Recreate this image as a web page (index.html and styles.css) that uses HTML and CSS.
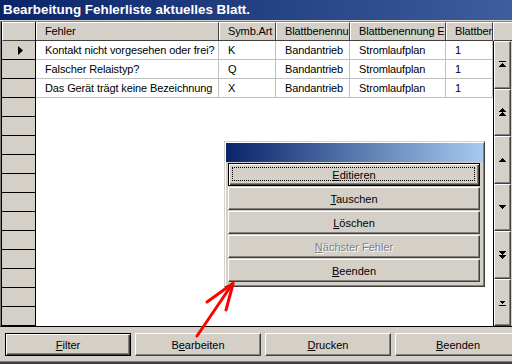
FILE: index.html
```
<!DOCTYPE html>
<html lang="de">

<head>
    <meta charset="UTF-8">
    <title>Bearbeitung Fehlerliste aktuelles Blatt.</title>
    <link rel="stylesheet" href="styles.css">
</head>

<body>
    <div class="window">
        <div class="caption">Bearbeitung Fehlerliste aktuelles Blatt.</div>

        <div class="sheet">
            <div class="selectors">
                <div class="sel-head"></div>
                <div class="sel"><svg width="6" height="9" viewBox="0 0 6 9"><polygon points="0,0 5,4.5 0,9" fill="#000"/></svg></div>
                <div class="sel"></div>
                <div class="sel"></div>
                <div class="sel"></div>
                <div class="sel"></div>
                <div class="sel"></div>
                <div class="sel"></div>
                <div class="sel"></div>
                <div class="sel"></div>
                <div class="sel"></div>
                <div class="sel"></div>
                <div class="sel"></div>
                <div class="sel"></div>
                <div class="sel"></div>
                <div class="sel"></div>
            </div>

            <div class="data">
                <div class="row head">
                    <div class="cell c-fehler">Fehler</div>
                    <div class="cell c-symb">Symb.Art</div>
                    <div class="cell c-blatt1">Blattbenennu</div>
                    <div class="cell c-blatt2">Blattbenennung E</div>
                    <div class="cell c-nr">Blattber</div>
                </div>
                <div class="row">
                    <div class="cell c-fehler">Kontakt nicht vorgesehen oder frei?</div>
                    <div class="cell c-symb">K</div>
                    <div class="cell c-blatt1">Bandantrieb</div>
                    <div class="cell c-blatt2">Stromlaufplan</div>
                    <div class="cell c-nr">1</div>
                </div>
                <div class="row">
                    <div class="cell c-fehler">Falscher Relaistyp?</div>
                    <div class="cell c-symb">Q</div>
                    <div class="cell c-blatt1">Bandantrieb</div>
                    <div class="cell c-blatt2">Stromlaufplan</div>
                    <div class="cell c-nr">1</div>
                </div>
                <div class="row">
                    <div class="cell c-fehler">Das Gerät trägt keine Bezeichnung</div>
                    <div class="cell c-symb">X</div>
                    <div class="cell c-blatt1">Bandantrieb</div>
                    <div class="cell c-blatt2">Stromlaufplan</div>
                    <div class="cell c-nr">1</div>
                </div>
            </div>

            <div class="nav">
                <div class="nav-head"></div>
                <!-- erster / seite hoch / hoch / runter / seite runter / letzter -->
                <div class="nav-btn"><svg width="7" height="7" viewBox="0 0 7 7"><rect x="0" y="0" width="7" height="1"/><polygon points="3.5,1.5 7,5.5 0,5.5"/></svg></div>
                <div class="nav-btn"><svg width="7" height="8" viewBox="0 0 7 8"><polygon points="3.5,0 7,4 0,4"/><polygon points="3.5,4 7,8 0,8"/></svg></div>
                <div class="nav-btn"><svg width="7" height="4" viewBox="0 0 7 4"><polygon points="3.5,0 7,4 0,4"/></svg></div>
                <div class="nav-btn"><svg width="7" height="4" viewBox="0 0 7 4"><polygon points="0,0 7,0 3.5,4"/></svg></div>
                <div class="nav-btn"><svg width="7" height="8" viewBox="0 0 7 8"><polygon points="0,0 7,0 3.5,4"/><polygon points="0,4 7,4 3.5,8"/></svg></div>
                <div class="nav-btn"><svg width="7" height="7" viewBox="0 0 7 7"><polygon points="0,1.5 7,1.5 3.5,5.5"/><rect x="0" y="6" width="7" height="1"/></svg></div>
            </div>
        </div>

        <div class="footer">
            <button class="btn default"><u>F</u>ilter</button>
            <button class="btn">B<u>e</u>arbeiten</button>
            <button class="btn"><u>D</u>rucken</button>
            <button class="btn"><u>B</u>eenden</button>
        </div>
        <div class="frame-bottom"></div>

        <div class="dialog">
            <div class="dialog-caption"></div>
            <button class="btn default focus"><u>E</u>ditieren</button>
            <button class="btn"><u>T</u>auschen</button>
            <button class="btn"><u>L</u>öschen</button>
            <button class="btn disabled"><u>N</u>ächster Fehler</button>
            <button class="btn"><u>B</u>eenden</button>
        </div>

        <svg class="arrow" width="512" height="364" viewBox="0 0 512 364">
            <path d="M197 336 L233 283" />
            <path d="M207 302 L232 284" />
            <path d="M226 310 L233 284" />
        </svg>
    </div>
</body>

</html>
```

FILE: styles.css
```
body {
    margin: 0;
    background-color: #d4d0c8;
    font-family: 'Liberation Sans', Arial, sans-serif;
    font-size: 11px;
    letter-spacing: -0.12px;
    color: #000;
}

.window {
    position: relative;
    width: 512px;
    height: 364px;
    overflow: hidden;
    background-color: #d4d0c8;
}

.caption {
    height: 20px;
    line-height: 20px;
    padding-left: 3px;
    background: linear-gradient(to right, #0a246a, #3d5d9c);
    color: #fff;
    font-weight: bold;
    font-size: 13.4px;
    letter-spacing: 0;
    white-space: nowrap;
}

/* datenblatt */
.sheet {
    display: flex;
    margin-top: 1px;
    border-top: 1px solid #808080;
    border-left: 1px solid #808080;
    border-bottom: 1px solid #000;
    height: 304px;
}

.selectors {
    width: 33px;
    border-left: 1px solid #000;
    border-right: 1px solid #000;
}
.sel-head {
    height: 17px;
    border-top: 1px solid #fff;
    border-left: 1px solid #fff;
    border-bottom: 1px solid #404040;
}
.sel {
    height: 18px;
    border-bottom: 1px solid #000;
    display: flex;
    align-items: center;
    justify-content: center;
}
.sel svg {
    margin-left: 5px;
}

.data {
    width: 457px;
    background-color: #fff;
}
.row {
    display: flex;
    height: 18px;
    border-bottom: 1px solid #c0c0c0;
}
.cell {
    box-sizing: border-box;
    height: 18px;
    line-height: 18px;
    padding-left: 9px;
    border-right: 1px solid #c0c0c0;
    white-space: nowrap;
    overflow: hidden;
}
.row.head {
    background-color: #d4d0c8;
    border-bottom: 1px solid #404040;
}
.row.head .cell {
    line-height: 17px;
    border-top: 1px solid #fff;
    border-left: 1px solid #fff;
    border-right: 1px solid #404040;
    padding-left: 8px;
}
.c-fehler { width: 183px; }
.c-symb { width: 57px; }
.c-blatt1 { width: 74px; }
.c-blatt2 { width: 96px; }
.c-nr { width: 47px; }

.nav {
    display: flex;
    flex-direction: column;
    width: 18px;
    border-left: 1px solid #000;
}
.nav-head {
    height: 17px;
    flex: none;
    border-top: 1px solid #fff;
    border-left: 1px solid #fff;
    border-bottom: 1px solid #404040;
    margin-left: -1px;
}
.nav-btn {
    flex: 1;
    display: flex;
    align-items: center;
    justify-content: center;
    width: 15px;
    border-top: 1px solid #fff;
    border-left: 1px solid #fff;
    border-right: 1px solid #404040;
    border-bottom: 1px solid #404040;
    box-shadow: inset -1px -1px #808080;
}
.nav-btn svg {
    shape-rendering: crispEdges;
    fill: #000;
}

/* knoepfe */
.btn {
    position: relative;
    box-sizing: border-box;
    height: 23px;
    padding: 0;
    background-color: #d4d0c8;
    font-family: 'Liberation Sans', Arial, sans-serif;
    font-size: 11px;
    color: #000;
    border: 1px solid;
    border-color: #fff #404040 #404040 #fff;
    box-shadow: inset -1px -1px #808080;
}
.btn.default {
    border: 1px solid #000;
    box-shadow: inset 1px 1px #fff, inset -1px -1px #404040, inset -2px -2px #808080;
}
.btn.focus::after {
    content: '';
    position: absolute;
    top: 3px;
    left: 3px;
    right: 4px;
    bottom: 4px;
    border: 1px dotted #000;
}
.btn.disabled {
    color: #808080;
    text-shadow: 1px 1px #fff;
}

.footer {
    display: flex;
    gap: 4px;
    height: 27px;
    padding: 6px 0 0 5px;
}
.footer .btn {
    flex: none;
    width: 126px;
}
.frame-bottom {
    height: 2px;
    margin-top: 1px;
    border-top: 1px solid #808080;
    background-color: #404040;
}

/* dialog */
.dialog {
    position: absolute;
    left: 224px;
    top: 141px;
    width: 261px;
    height: 146px;
    box-sizing: border-box;
    padding: 1px;
    border: 1px solid;
    border-color: #d4d0c8 #404040 #404040 #d4d0c8;
    box-shadow: inset 1px 1px #fff, inset -1px -1px #808080;
    background-color: #d4d0c8;
    display: flex;
    flex-direction: column;
}
.dialog-caption {
    height: 19px;
    margin-bottom: 1px;
    background: linear-gradient(to right, #0a246a, #a6caf0);
}
.dialog .btn {
    width: 252px;
    margin: 0 0 1px 2px;
}

.arrow {
    position: absolute;
    left: 0;
    top: 0;
    fill: none;
    stroke: #ff0000;
    stroke-width: 3;
    stroke-linecap: round;
}
```
